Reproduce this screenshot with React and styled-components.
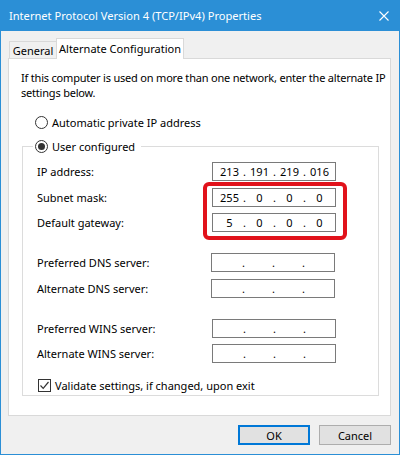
import React from "react";
import styled, {createGlobalStyle} from "styled-components";

const GlobalStyle = createGlobalStyle`
  html, body {
    margin: 0;
    padding: 0;
    background: #ffffff;
  }
  body {
    font-family: "Noto Sans", "Open Sans", sans-serif;
    font-size: 11px;
    color: #000;
  }
  * {
    box-sizing: border-box;
  }
`

const Window = styled.div`
  width: 400px;
  height: 455px;
  border: 1px solid #2b8fd6;
  border-top: none;
  background: #f0f0f0;
  display: flex;
  flex-direction: column;
`

const TitleBar = styled.div`
  height: 31px;
  margin: 0 -1px;
  padding: 0 11px 0 9px;
  background: #2b8fd6;
  color: #fff;
  font-size: 11.1px;
  display: flex;
  align-items: center;
  justify-content: space-between;
`

const Body = styled.div`
  flex: 1;
  display: flex;
  flex-direction: column;
  padding: 7px 8px 0 7px;
`

const TabStrip = styled.div`
  display: flex;
  align-items: flex-end;
  height: 20px;
  padding-left: 1px;
`

const Tab = styled.div`
  position: relative;
  z-index: ${p => p.$active ? 1 : 0};
  width: ${p => p.$width}px;
  height: ${p => p.$active ? 21 : 17}px;
  margin-left: ${p => p.$active ? -1 : 0}px;
  margin-bottom: ${p => p.$active ? -1 : 0}px;
  border: 1px solid #d9d9d9;
  border-bottom: none;
  background: ${p => p.$active ? "#fff" : "#f0f0f0"};
  white-space: nowrap;
  display: flex;
  align-items: center;
  justify-content: center;
  padding-bottom: ${p => p.$active ? 1 : 0}px;
`

const Panel = styled.div`
  flex: 1;
  background: #fff;
  border: 1px solid #d9d9d9;
  padding: 11px 11px 0 12px;
`

const Intro = styled.p`
  margin: 0;
  line-height: 15px;
  letter-spacing: -0.2px;
  white-space: nowrap;
`

const RadioRow = styled.label`
  display: flex;
  align-items: center;
  height: 15px;
  gap: 4px;
  white-space: nowrap;
  margin: ${p => p.$top || 0}px 0 0 ${p => p.$left || 0}px;
`

const RadioDot = styled.span`
  width: 13px;
  height: 13px;
  border-radius: 50%;
  border: 1px solid #333;
  background: #fff;
  display: flex;
  align-items: center;
  justify-content: center;

  &::after {
    content: "";
    width: 7px;
    height: 7px;
    border-radius: 50%;
    background: ${p => p.$checked ? "#333" : "transparent"};
  }
`

const GroupBox = styled.fieldset`
  margin: 9px 0 0 1px;
  padding: 8px 0 2px 14px;
  min-width: 0;
  border: 1px solid #dcdcdc;
`

const Legend = styled.legend`
  margin-left: -4px;
  padding: 0 6px 0 2px;
`

const Fields = styled.div`
  position: relative;
`

const FieldGroup = styled.div`
  display: flex;
  flex-direction: column;
  gap: 6.5px;
  margin-top: ${p => p.$top || 0}px;
`

const FieldRow = styled.div`
  display: grid;
  grid-template-columns: ${p => 175 + (p.$shift || 0)}px 124px;
  align-items: center;
  height: 19px;
  white-space: nowrap;
`

const IpBox = styled.div`
  height: 19px;
  border: 1px solid #7a7a7a;
  background: #fff;
  display: flex;
  align-items: center;
  padding-left: 4px;
`

const Octet = styled.span`
  flex: 0 0 25px;
  text-align: center;
`

const Dot = styled.span`
  flex: 0 0 5px;
  text-align: center;
`

const Highlight = styled.div`
  position: absolute;
  left: 166px;
  top: 20px;
  width: 144px;
  height: 58px;
  border: 4px solid #e1121b;
  border-radius: 6px;
  pointer-events: none;
`

const CheckRow = styled.label`
  display: flex;
  align-items: center;
  gap: 4px;
  height: 15px;
  margin: 15px 0 0 1px;
  white-space: nowrap;
`

const CheckBox = styled.span`
  width: 13px;
  height: 13px;
  border: 1px solid #333;
  background: #fff;
  display: flex;
  align-items: center;
  justify-content: center;
`

const Footer = styled.div`
  height: 38px;
  display: flex;
  align-items: center;
  justify-content: flex-end;
  gap: 9px;
`

const Button = styled.button`
  width: 72px;
  height: 20px;
  margin: 0;
  padding: 0;
  font: inherit;
  color: #000;
  background: #e1e1e1;
  border: ${p => p.$primary ? "2px solid #0078d7" : "1px solid #adadad"};
`

const IpField = ({value = ["", "", "", ""]}) => (
    <IpBox>
        <Octet>{value[0]}</Octet><Dot>.</Dot>
        <Octet>{value[1]}</Octet><Dot>.</Dot>
        <Octet>{value[2]}</Octet><Dot>.</Dot>
        <Octet>{value[3]}</Octet>
    </IpBox>
);

const Field = ({label, value, shift}) => (
    <FieldRow $shift={shift}>
        <span>{label}</span>
        <IpField value={value}/>
    </FieldRow>
);

const App = () => {
    return (
        <>
            <GlobalStyle/>
            <Window>
                <TitleBar>
                    <span>Internet Protocol Version 4 (TCP/IPv4) Properties</span>
                    <svg width="10" height="10" viewBox="0 0 10 10">
                        <path d="M0.5 0.5 L9.5 9.5 M9.5 0.5 L0.5 9.5" stroke="#fff" strokeWidth="1.1"/>
                    </svg>
                </TitleBar>
                <Body>
                    <TabStrip>
                        <Tab $width={48}>General</Tab>
                        <Tab $active $width={128}>Alternate Configuration</Tab>
                    </TabStrip>
                    <Panel>
                        <Intro>
                            If this computer is used on more than one network, enter the alternate IP<br/>
                            settings below.
                        </Intro>
                        <RadioRow $top={15} $left={14}>
                            <RadioDot/>
                            Automatic private IP address
                        </RadioRow>
                        <GroupBox>
                            <Legend>
                                <RadioRow>
                                    <RadioDot $checked/>
                                    User configured
                                </RadioRow>
                            </Legend>
                            <Fields>
                                <FieldGroup>
                                    <Field label="IP address:" value={["213", "191", "219", "016"]}/>
                                    <Field label="Subnet mask:" value={["255", "0", "0", "0"]}/>
                                    <Field label="Default gateway:" value={["5", "0", "0", "0"]}/>
                                </FieldGroup>
                                <FieldGroup $top={21}>
                                    <Field label="Preferred DNS server:" shift={-1}/>
                                    <Field label="Alternate DNS server:" shift={-1}/>
                                </FieldGroup>
                                <FieldGroup $top={21}>
                                    <Field label="Preferred WINS server:"/>
                                    <Field label="Alternate WINS server:"/>
                                </FieldGroup>
                                <Highlight/>
                            </Fields>
                            <CheckRow>
                                <CheckBox>
                                    <svg width="11" height="11" viewBox="0 0 11 11">
                                        <path d="M1.5 5.5 L4.2 8.3 L9.5 2" fill="none" stroke="#333" strokeWidth="1.2"/>
                                    </svg>
                                </CheckBox>
                                Validate settings, if changed, upon exit
                            </CheckRow>
                        </GroupBox>
                    </Panel>
                    <Footer>
                        <Button $primary>OK</Button>
                        <Button>Cancel</Button>
                    </Footer>
                </Body>
            </Window>
        </>
    );
}

export default App;
